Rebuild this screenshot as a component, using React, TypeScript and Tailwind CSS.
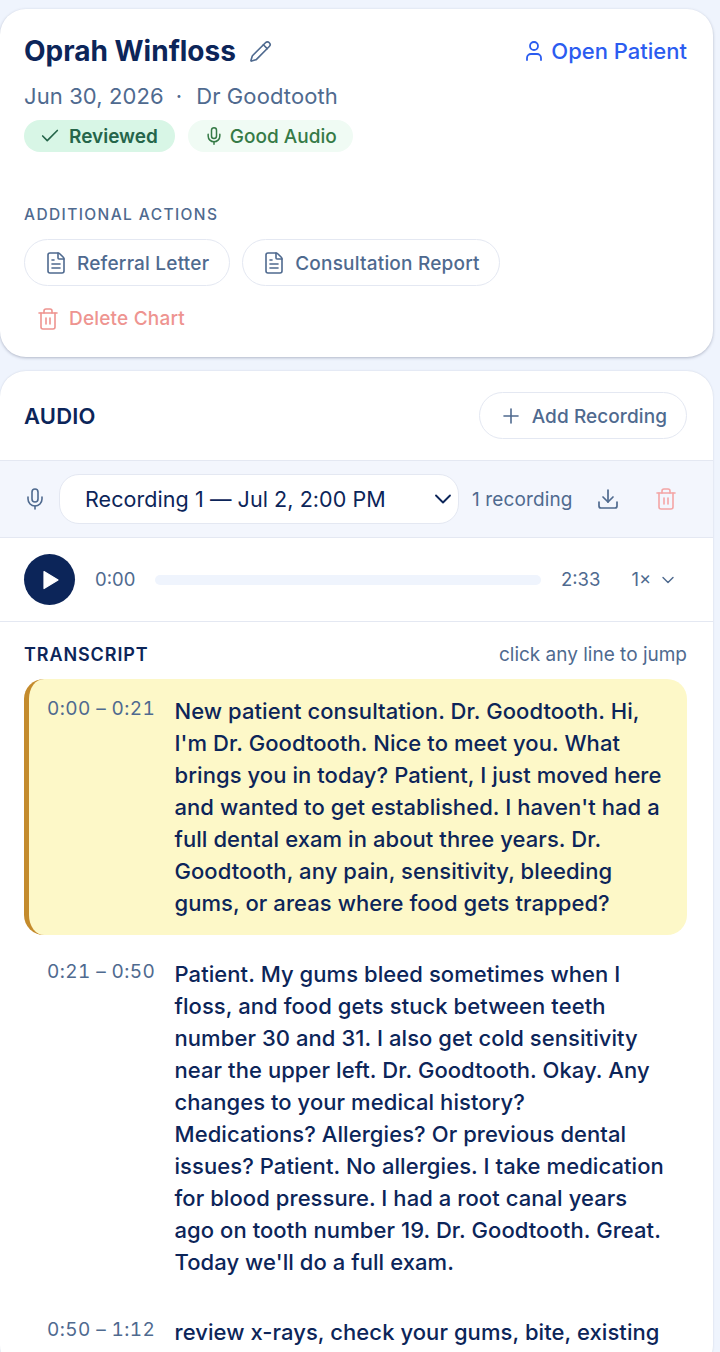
import React from "react";
import { Pencil, User, Check, Mic, FileText, Trash2, Plus, Download, ChevronDown } from "lucide-react";

const rows = [
  {
    t: "0:00 – 0:21",
    active: true,
    text: "New patient consultation. Dr. Goodtooth. Hi, I'm Dr. Goodtooth. Nice to meet you. What brings you in today? Patient, I just moved here and wanted to get established. I haven't had a full dental exam in about three years. Dr. Goodtooth, any pain, sensitivity, bleeding gums, or areas where food gets trapped?",
  },
  {
    t: "0:21 – 0:50",
    active: false,
    text: "Patient. My gums bleed sometimes when I floss, and food gets stuck between teeth number 30 and 31. I also get cold sensitivity near the upper left. Dr. Goodtooth. Okay. Any changes to your medical history? Medications? Allergies? Or previous dental issues? Patient. No allergies. I take medication for blood pressure. I had a root canal years ago on tooth number 19. Dr. Goodtooth. Great. Today we'll do a full exam.",
  },
  {
    t: "0:50 – 1:12",
    active: false,
    text: "review x-rays, check your gums, bite, existing restorations, and talk through any treatment you may need.",
  },
];

export default function App() {
  return (
    <div className="h-[1352px] w-[720px] overflow-hidden bg-[#eff4fd] pt-[9px] pr-[7px] font-['Inter',sans-serif] text-[#0c2559]">
      <section className="h-[348px] rounded-[26px] bg-white pt-6 pr-[26px] pl-6 shadow-[0_1px_3px_rgba(60,70,100,0.35)]">
        <div className="flex items-start justify-between">
          <div className="flex items-center gap-[13px]">
            <h1 className="text-[28px] leading-9 font-bold">Oprah Winfloss</h1>
            <Pencil className="size-[23px] text-[#4f6a8f]" strokeWidth={1.7} />
          </div>
          <div className="flex h-9 items-center gap-[5px] text-[#2b5cf0]">
            <User className="size-6" strokeWidth={1.8} />
            <span className="text-[22px] leading-9 font-medium">Open Patient</span>
          </div>
        </div>
        <div className="mt-[13px] flex items-center text-[22px] leading-7 tracking-[0.1px] text-[#4f6a8f]">
          <span>Jun 30, 2026</span>
          <span className="mr-[14px] ml-[12px]">·</span>
          <span>Dr Goodtooth</span>
        </div>
        <div className="mt-[10px] flex gap-[13px]">
          <div className="flex h-8 items-center gap-2 rounded-full bg-[#d8f6e6] pr-[17px] pl-[15px] text-[#25654a]">
            <Check className="size-[22px]" strokeWidth={1.8} />
            <span className="pt-[2px] text-[19px] font-semibold">Reviewed</span>
          </div>
          <div className="flex h-8 items-center gap-[6px] rounded-full bg-[#f0fbf4] pr-4 pl-4 text-[#357a46]">
            <Mic className="size-5" strokeWidth={1.8} />
            <span className="pt-[2px] text-[19px] font-medium">Good Audio</span>
          </div>
        </div>
        <div className="mt-[53px] text-[15.5px] leading-5 font-medium tracking-[1.4px] text-[#4f6a8f]">ADDITIONAL ACTIONS</div>
        <div className="mt-[14px] flex gap-3">
          <button className="flex h-[47px] items-center gap-[9px] rounded-full border border-[#e4e8f2] pr-5 pl-[19px] text-[#4f6a8f]">
            <FileText className="size-6" strokeWidth={1.6} />
            <span className="pt-[4px] text-[19px] font-medium tracking-[0.2px]">Referral Letter</span>
          </button>
          <button className="flex h-[47px] items-center gap-[9px] rounded-full border border-[#e4e8f2] pr-[19px] pl-[19px] text-[#4f6a8f]">
            <FileText className="size-6" strokeWidth={1.6} />
            <span className="pt-[4px] text-[19px] font-medium tracking-[0.2px]">Consultation Report</span>
          </button>
        </div>
        <button className="mt-[9px] ml-3 flex h-[47px] items-center gap-[9px] text-[#ee9490]">
          <Trash2 className="size-6" strokeWidth={1.6} />
          <span className="pt-[2px] text-[19px] font-medium tracking-[0.2px]">Delete Chart</span>
        </button>
      </section>

      <section className="mt-[14px] h-[1000px] rounded-[26px] bg-white shadow-[0_0_2px_rgba(60,70,100,0.2)]">
        <div className="flex h-[90px] items-center justify-between border-b border-[#e4e8f2] pr-[26px] pl-6">
          <h2 className="pt-[2px] text-[22px] font-semibold tracking-[0.2px]">AUDIO</h2>
          <button className="flex h-[47px] items-center gap-[9px] rounded-full border border-[#e4e8f2] pr-[19px] pl-[19px] text-[#4f6a8f]">
            <Plus className="size-6" strokeWidth={1.6} />
            <span className="pt-[4px] text-[19px] font-medium tracking-[0.08px]">Add Recording</span>
          </button>
        </div>
        <div className="flex h-[77px] items-center border-b border-[#e4e8f2] bg-[#f3f6fd] pl-[23px]">
          <Mic className="size-6 text-[#4f6a8f]" strokeWidth={1.6} />
          <div className="ml-3 flex h-[50px] w-[400px] items-center justify-between rounded-[20px] border border-[#e4e8f2] bg-white pr-px pl-[25px]">
            <span className="text-[21.5px] tracking-[0.07px]">Recording 1 — Jul 2, 2:00 PM</span>
            <ChevronDown className="size-7" strokeWidth={1.6} />
          </div>
          <span className="ml-[13px] pt-[2px] text-[19px] tracking-[0.13px] text-[#4f6a8f]">1 recording</span>
          <Download className="ml-[23px] size-6 text-[#4f6a8f]" strokeWidth={1.7} />
          <Trash2 className="ml-[34px] size-6 text-[#f4a5a5]" strokeWidth={1.6} />
        </div>
        <div className="flex h-[84px] items-center border-b border-[#e4e8f2] px-6">
          <div className="flex size-[51px] items-center justify-center rounded-full bg-[#0c2559]">
            <svg className="ml-[2px]" width="16" height="20" viewBox="0 0 16 20" aria-hidden="true">
              <path d="M1 1.5 L15 10 L1 18.5 Z" fill="#ffffff" stroke="#ffffff" strokeWidth="1.2" strokeLinejoin="round" />
            </svg>
          </div>
          <span className="ml-5 w-[41px] text-[18.5px] text-[#4f6a8f]">0:00</span>
          <div className="ml-[19px] h-[10px] w-[386px] rounded-full bg-[#eff4fd]" />
          <span className="ml-5 text-[18.5px] text-[#4f6a8f]">2:33</span>
          <span className="ml-[31px] text-[18.5px] text-[#4f6a8f]">1×</span>
          <ChevronDown className="ml-[7px] size-[20px] text-[#4f6a8f]" strokeWidth={1.7} />
        </div>
        <div className="flex h-[57px] items-center justify-between pt-[8px] pr-[26px] pl-6">
          <h3 className="text-[18px] font-semibold tracking-[0.9px]">TRANSCRIPT</h3>
          <span className="pt-[2px] text-[19px] text-[#4f6a8f]">click any line to jump</span>
        </div>
        <div className="flex flex-col gap-[6.5px] pr-[26px] pl-6">
          {rows.map((r) => (
            <div
              key={r.t}
              className={
                r.active
                  ? "flex rounded-[20px] border-l-[5px] border-[#c48b2c] bg-[#fdf8c8] py-4 pr-[18px] pl-[18px]"
                  : "flex rounded-[20px] border-l-[5px] border-transparent py-4 pr-[18px] pl-[18px]"
              }
            >
              <span className="w-[127.5px] shrink-0 text-[19px] leading-[28px] tracking-[0.4px] text-[#4f6a8f] tabular-nums">{r.t}</span>
              <p className="text-[22px] leading-8 font-[450] tracking-[0.07px]">{r.text}</p>
            </div>
          ))}
        </div>
      </section>
    </div>
  );
}
